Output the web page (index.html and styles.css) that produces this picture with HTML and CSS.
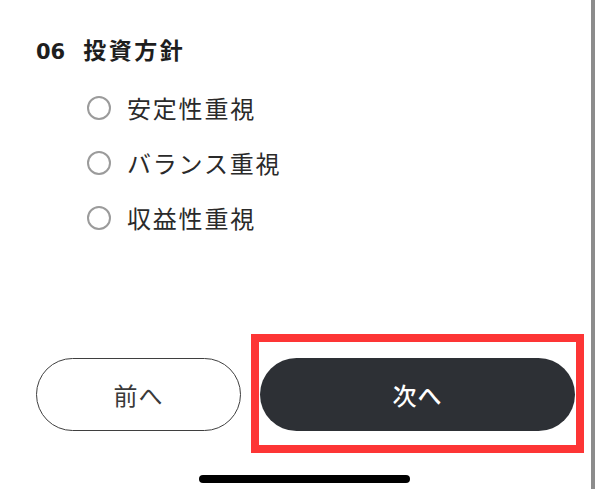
FILE: index.html
```html
<!DOCTYPE html>
<html lang="ja">
<head>
    <meta charset="UTF-8">
    <meta name="viewport" content="width=device-width, initial-scale=1.0">
    <title>投資方針</title>
    <link rel="stylesheet" href="styles.css">
</head>
<body>
    <div class="screen">
        <div class="content">
            <h2 class="question"><span class="question-no">06</span>投資方針</h2>
            <ul class="options">
                <li class="option"><span class="radio"></span>安定性重視</li>
                <li class="option"><span class="radio"></span>バランス重視</li>
                <li class="option"><span class="radio"></span>収益性重視</li>
            </ul>
        </div>

        <div class="actions">
            <button class="btn btn-prev">前へ</button>
            <div class="highlight">
                <button class="btn btn-next">次へ</button>
            </div>
        </div>

        <div class="home-bar">
            <span class="home-indicator"></span>
        </div>
    </div>
    <div class="edge"></div>
</body>
</html>
```

FILE: styles.css
```css
html, body {
    margin: 0;
    padding: 0;
    background-color: #fff;
}
body {
    display: flex;
    width: 596px;
    height: 493px;
    overflow: hidden;
    font-family: "Noto Sans CJK JP", "Noto Sans", sans-serif;
    color: #333;
}
.screen {
    flex: 1;
    display: flex;
    flex-direction: column;
}
.edge {
    width: 4px;
    margin-right: 1px;
    margin-bottom: 4px;
    background-color: #8c8c8c;
}
.content {
    padding: 34px 0 0 36px;
}
.question {
    margin: 0;
    font-size: 23px;
    line-height: 30px;
    font-weight: 700;
    letter-spacing: 2.5px;
    color: #1e1e1e;
}
.question-no {
    display: inline-block;
    margin-right: 18px;
    font-family: "DejaVu Sans", sans-serif;
    font-size: 21px;
    letter-spacing: 0;
}
.options {
    list-style: none;
    margin: 13px 0 0 51px;
    padding: 0;
}
.option {
    display: flex;
    align-items: center;
    gap: 16px;
    height: 55px;
    font-size: 24px;
    letter-spacing: 1.8px;
    color: #2a2a2a;
}
.radio {
    width: 20px;
    height: 20px;
    border: 2px solid #9b9b9b;
    border-radius: 50%;
    flex-shrink: 0;
}
.actions {
    margin-top: auto;
    display: flex;
    align-items: center;
    gap: 10px;
    padding-left: 36px;
}
.btn {
    height: 73px;
    border-radius: 37px;
    font-family: inherit;
    font-size: 24px;
    letter-spacing: 1px;
    cursor: pointer;
}
.btn-prev {
    width: 205px;
    margin-top: 1px;
    background-color: #fff;
    border: 1.5px solid #3f3f3f;
    color: #3a3a3a;
}
.highlight {
    display: flex;
    width: 315px;
    padding: 16px 1px 14px 1px;
    border: 8px solid #fd3535;
}
.btn-next {
    flex: 1;
    background-color: #2d3035;
    border: none;
    color: #fff;
    font-weight: 500;
}
.home-bar {
    padding: 22px 0 10px 199px;
}
.home-indicator {
    display: block;
    width: 211px;
    height: 8px;
    border-radius: 4px;
    background-color: #000;
}
```
